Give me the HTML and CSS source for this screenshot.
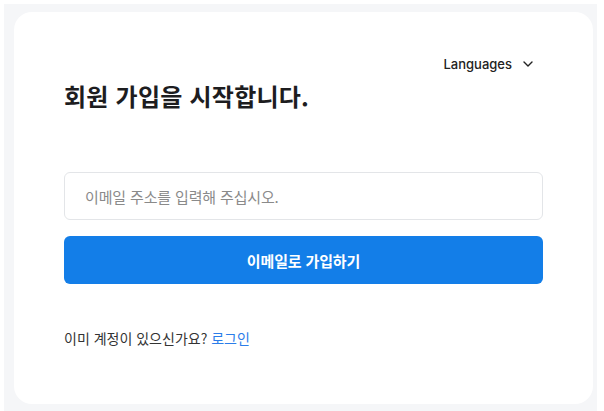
FILE: index.html
```html
<!DOCTYPE html>
<html lang="ko">

<head>
    <meta charset="UTF-8" />
    <meta name="viewport" content="width=device-width, initial-scale=1.0" />
    <title>회원 가입</title>
    <link rel="stylesheet" href="styles.css">
</head>

<body>
    <div class="bataeng">
        <div class="kadeu">
            <div class="eoneoJul">
                <button class="eoneoBtn" type="button">
                    <span>Languages</span>
                    <svg width="10" height="6" viewBox="0 0 10 6" fill="none">
                        <path d="M1 1l4 4 4-4" stroke="#222" stroke-width="1.4" stroke-linecap="round" stroke-linejoin="round" />
                    </svg>
                </button>
            </div>

            <h2 class="jemok">회원 가입을 시작합니다.</h2>

            <input class="imeil" type="email" placeholder="이메일 주소를 입력해 주십시오." />
            <button class="gaipBtn" type="button">이메일로 가입하기</button>

            <p class="login">이미 계정이 있으신가요? <a href="#">로그인</a></p>
        </div>
    </div>
</body>

</html>
```

FILE: styles.css
```css
body {
    margin: 0;
    background: #fff;
    font-family: "Noto Sans CJK KR", "Noto Sans", sans-serif;
}

.bataeng {
    margin: 4px 7px 0 4px;
    padding: 8px 4px 7px 10px;
    background: #f5f6f8;
}

.kadeu {
    background: #fff;
    border-radius: 18px;
    padding: 40px 50px 56px;
}

.eoneoJul {
    display: flex;
    justify-content: flex-end;
    padding-right: 10px;
    height: 24px;
}

.eoneoBtn {
    display: flex;
    align-items: center;
    gap: 11px;
    padding: 0;
    border: none;
    background: none;
    font-family: Inter, Roboto, sans-serif;
    font-size: 13px;
    font-weight: 500;
    color: #222;
    cursor: pointer;
}

.jemok {
    margin: 4px 0 0;
    font-size: 24px;
    line-height: 32px;
    font-weight: 700;
    color: #1d1d1f;
    letter-spacing: 0.01em;
}

.imeil {
    display: block;
    box-sizing: border-box;
    width: 100%;
    height: 48px;
    margin-top: 60px;
    padding: 0 20px;
    border: 1px solid #e3e5e8;
    border-radius: 6px;
    font-family: inherit;
    font-size: 15px;
    color: #222;
    letter-spacing: -0.01em;
    outline: none;
}

.imeil::placeholder {
    color: #8a8a8a;
}

.gaipBtn {
    display: block;
    width: 100%;
    height: 48px;
    margin-top: 16px;
    border: none;
    border-radius: 6px;
    background: #137ee8;
    color: #fff;
    font-family: inherit;
    font-size: 15px;
    font-weight: 700;
    letter-spacing: -0.01em;
    cursor: pointer;
}

.login {
    margin: 44px 0 0;
    font-size: 14px;
    line-height: 20px;
    color: #333;
    letter-spacing: 0;
}

.login a {
    color: #2b7de9;
    text-decoration: none;
}
```
